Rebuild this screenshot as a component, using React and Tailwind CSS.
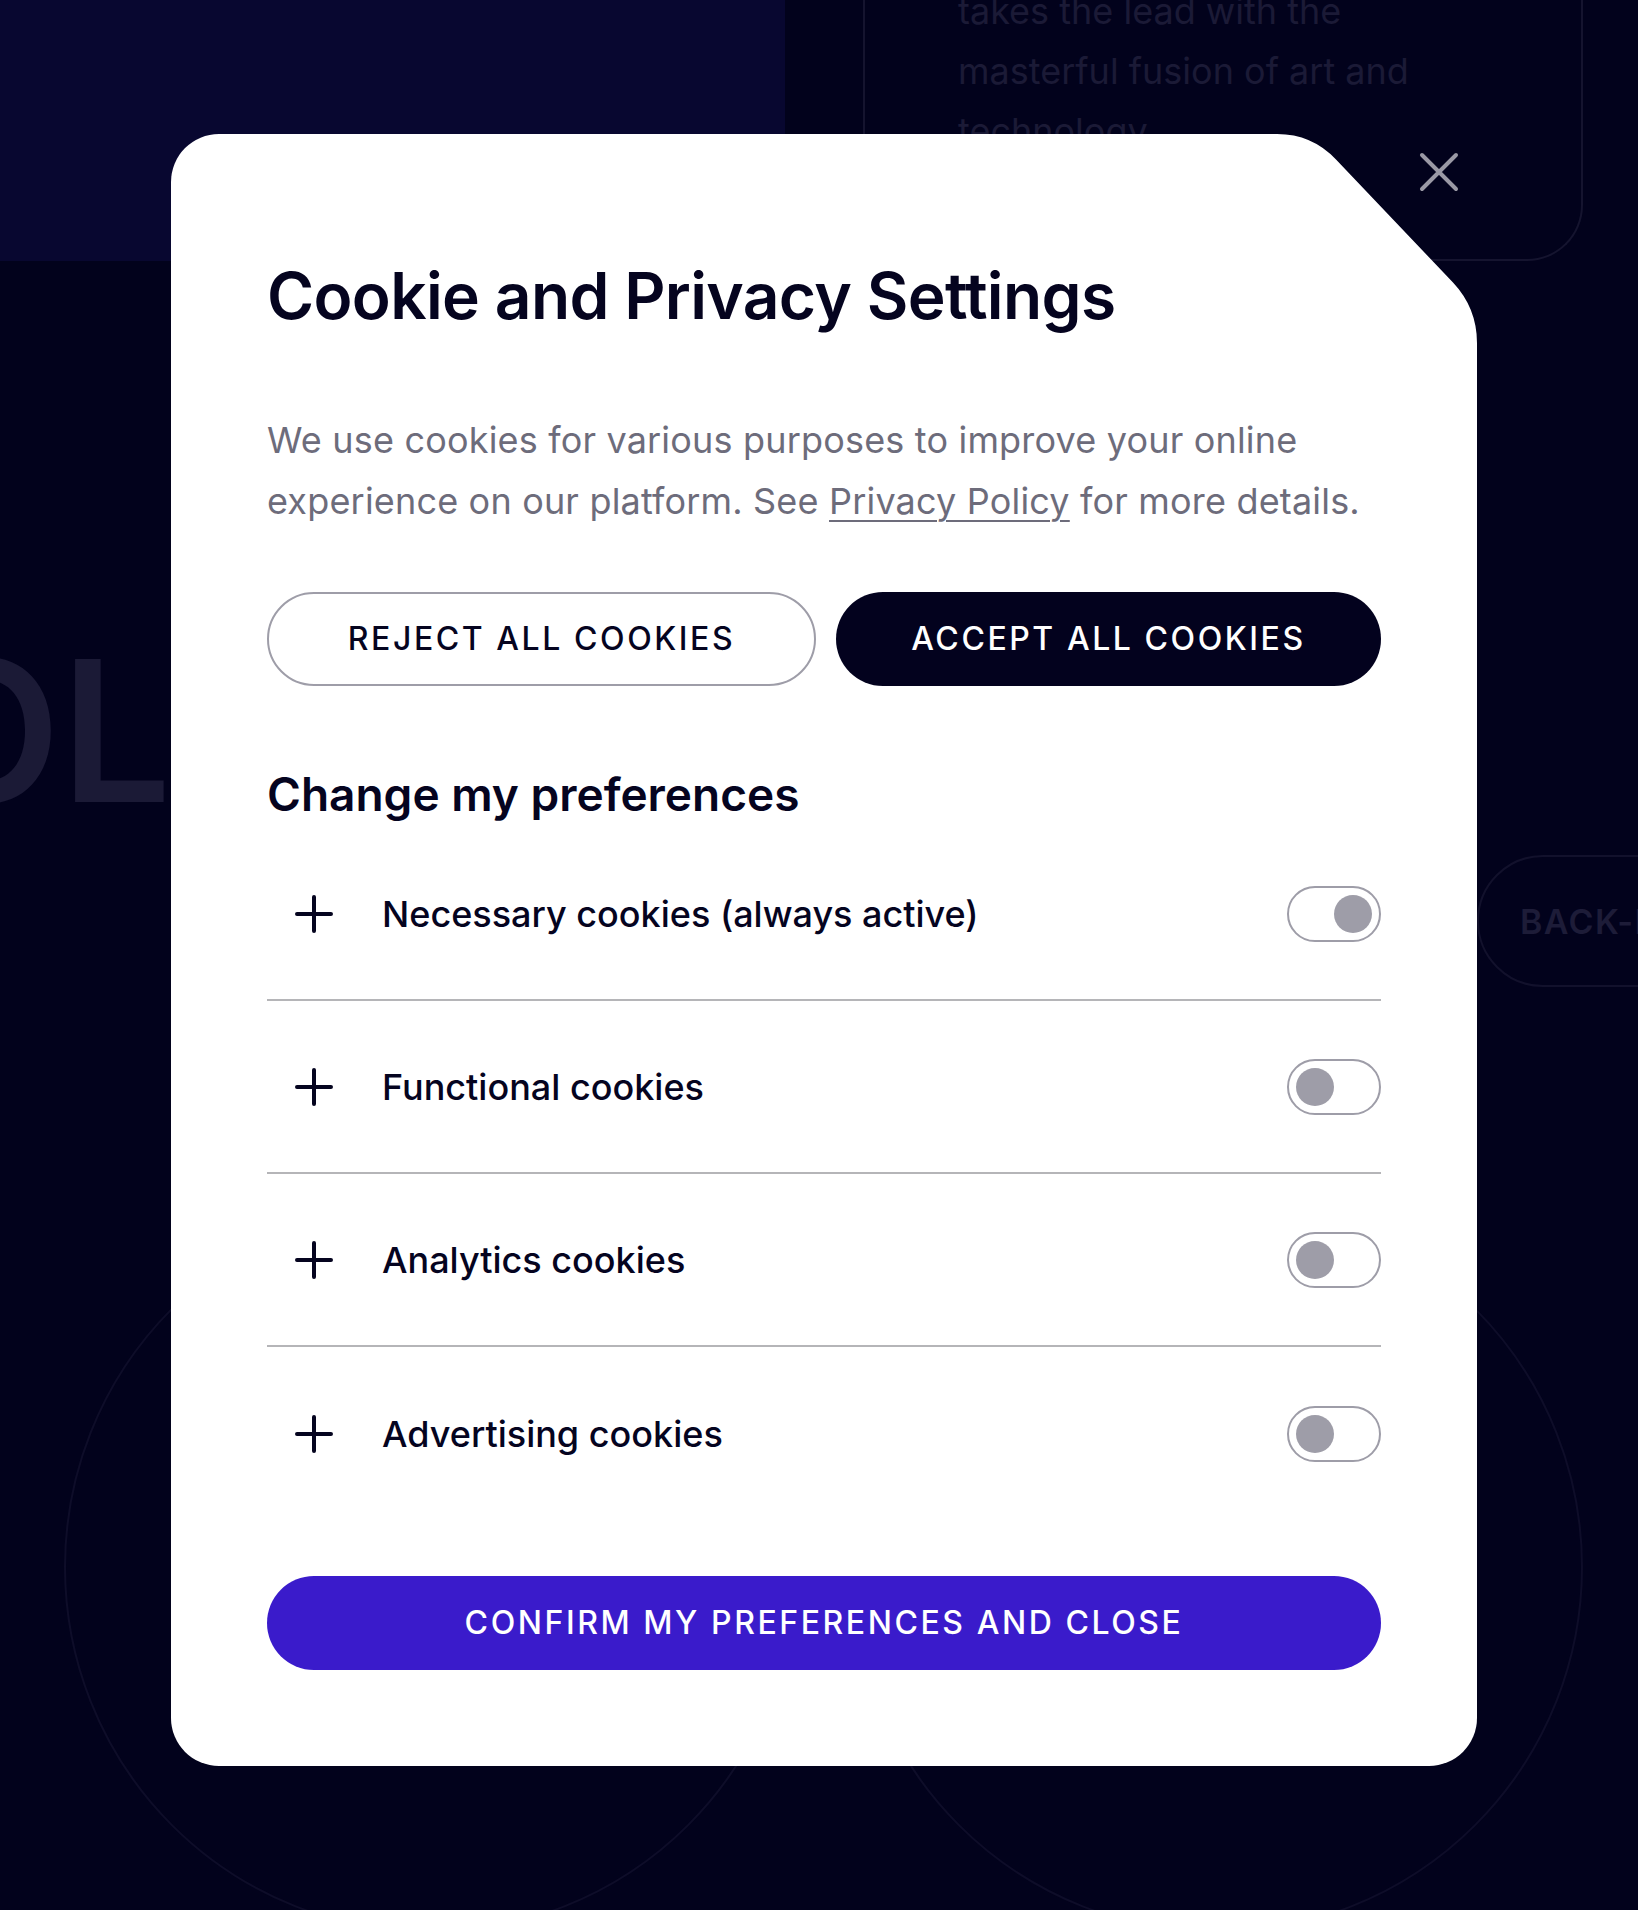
import React, { useState } from 'react';

const rows = [
  { id: 'necessary', label: 'Necessary cookies (always active)', on: true },
  { id: 'functional', label: 'Functional cookies', on: false },
  { id: 'analytics', label: 'Analytics cookies', on: false },
  { id: 'advertising', label: 'Advertising cookies', on: false },
];

const PlusIcon = () => (
  <svg width="38" height="38" viewBox="0 0 38 38" fill="none" stroke="#05041f" strokeWidth="4" strokeLinecap="round">
    <path d="M19 2v34M2 19h34" />
  </svg>
);

const Toggle = ({ on }) => (
  <div className={`flex h-[56px] w-[94px] items-center rounded-full border-2 border-[#9e9da8] p-[7px] ${on ? 'justify-end' : 'justify-start'}`}>
    <div className="h-[38px] w-[38px] rounded-full bg-[#9e9da8]" />
  </div>
);

const App = () => {
  const [prefs] = useState(rows);

  return (
    <div className="relative h-[1910px] w-[1638px] overflow-hidden bg-[#02021c] font-['Inter',sans-serif]">
      {/* page behind the dialog */}
      <div className="flex h-[261px]">
        <div className="h-full w-[785px] bg-[#080730]" />
        <div className="ml-[78px] h-full w-[720px] rounded-br-[56px] border-x-2 border-b-2 border-[#15142f]">
          <p className="-mt-[19px] pl-[93px] text-[36px] leading-[60px] text-[#1b1a36]">
            takes the lead with the
            <br />
            masterful fusion of art and
            <br />
            technology
          </p>
        </div>
      </div>

      <div className="mt-[372px] -ml-[90px] whitespace-nowrap text-[196px] font-semibold leading-none text-[#1b1a36]">
        OLOGY
      </div>

      <div className="mt-[26px] ml-[1477px] flex h-[132px] w-[300px] items-center rounded-full border-2 border-[#12112c] pl-[41px]">
        <span className="text-[34px] font-semibold tracking-[0.04em] text-[#1d1c38]">BACK-END</span>
      </div>

      <div className="mt-[214px] flex gap-[55px] pl-[64px]">
        <div className="h-[732px] w-[732px] shrink-0 rounded-full border-2 border-[#0e0d29]" />
        <div className="h-[732px] w-[732px] shrink-0 rounded-full border-2 border-[#0e0d29]" />
      </div>

      {/* cookie dialog */}
      <div className="absolute left-[171px] top-[134px] w-[1306px] rounded-[48px] bg-white px-[96px] pb-[96px] pt-[124px] [clip-path:path('M0,0_L1106,0_Q1141,0_1165,25.5_L1282,148.5_Q1306,174_1306,209_L1306,3000_L0,3000_Z')]">
        <h1 className="text-[64px] font-semibold leading-[76px] tracking-[-0.01em] text-[#05041f]">
          Cookie and Privacy Settings
        </h1>

        <p className="mt-[76px] text-[36px] leading-[61px] tracking-[0.005em] text-[#6d6c7b]">
          We use cookies for various purposes to improve your online
          <br />
          experience on our platform. See{' '}
          <a href="#" className="underline decoration-2 underline-offset-[6px]">
            Privacy Policy
          </a>{' '}
          for more details.
        </p>

        <div className="mt-[60px] flex gap-[20px]">
          <button className="h-[94px] flex-1 rounded-full border-2 border-[#9e9da8] text-[32px] font-medium tracking-[0.08em] text-[#05041f]">
            REJECT ALL COOKIES
          </button>
          <button className="h-[94px] flex-1 rounded-full bg-[#03021e] text-[32px] font-medium tracking-[0.08em] text-white">
            ACCEPT ALL COOKIES
          </button>
        </div>

        <h2 className="mt-[80px] text-[46px] font-semibold leading-[56px] text-[#05041f]">
          Change my preferences
        </h2>

        <div className="mt-[6px]">
          {prefs.map((row, i) => (
            <div
              key={row.id}
              className={`flex h-[173px] items-center pl-[28px] ${i < prefs.length - 1 ? 'border-b-2 border-[#b5b5b8]' : ''}`}
            >
              <PlusIcon />
              <span className="ml-[49px] flex-1 text-[36px] font-medium text-[#05041f]">{row.label}</span>
              <Toggle on={row.on} />
            </div>
          ))}
        </div>

        <button className="mt-[56px] h-[94px] w-full rounded-full bg-[#3a1bcb] text-[32px] font-medium tracking-[0.08em] text-white">
          CONFIRM MY PREFERENCES AND CLOSE
        </button>
      </div>

      <button className="absolute left-[1419px] top-[152px] h-[40px] w-[40px]" aria-label="Close">
        <svg width="40" height="40" viewBox="0 0 40 40" fill="none" stroke="#9a99a5" strokeWidth="4" strokeLinecap="round">
          <path d="M3 3l34 34M37 3L3 37" />
        </svg>
      </button>
    </div>
  );
};

export default App;
